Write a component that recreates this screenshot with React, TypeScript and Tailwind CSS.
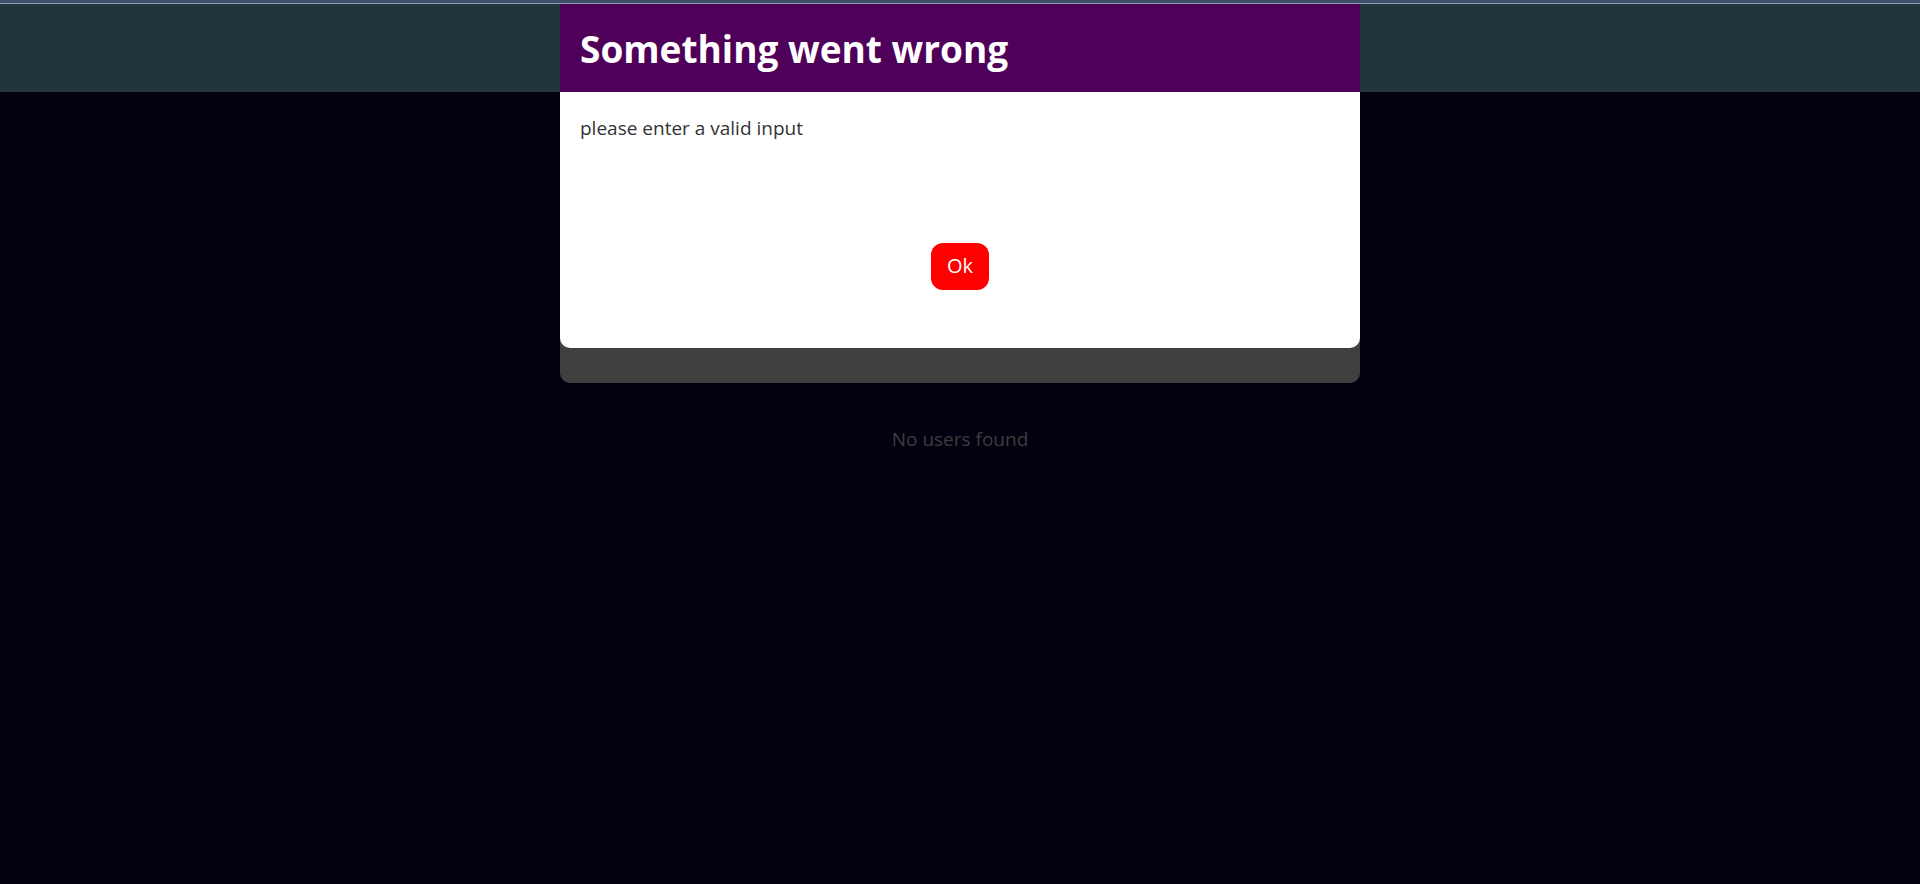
export default function App() {
  return (
    <div className="relative min-h-[884px] bg-[#04000f] font-['Open_Sans',sans-serif]">
      <div className="h-[3px] bg-[#3c5068]" />
      <div className="h-px bg-[#8c9bb0]" />
      <header className="h-[88px] bg-[#21353d]" />

      <main className="flex flex-col items-center">
        <div className="mt-[30px] h-[261px] w-[800px] rounded-[10px] bg-[#404040]" />
        <p className="mt-[42px] text-[19px] text-[#3d3d3d]">No users found</p>
      </main>

      <div className="absolute top-[4px] left-1/2 w-[800px] -translate-x-1/2 overflow-hidden rounded-b-[10px] bg-white">
        <div className="flex h-[88px] items-center bg-[#4f0059] px-5">
          <h2 className="pt-[2px] text-[37px] font-bold text-white">Something went wrong</h2>
        </div>
        <div className="h-[256px] px-5 pt-[22px]">
          <p className="text-[19px] text-[#333]">please enter a valid input</p>
          <div className="mt-[100px] flex justify-center">
            <button className="h-[47px] rounded-[12px] bg-[#ff0000] px-4 text-[20px] text-white">
              Ok
            </button>
          </div>
        </div>
      </div>
    </div>
  );
}
